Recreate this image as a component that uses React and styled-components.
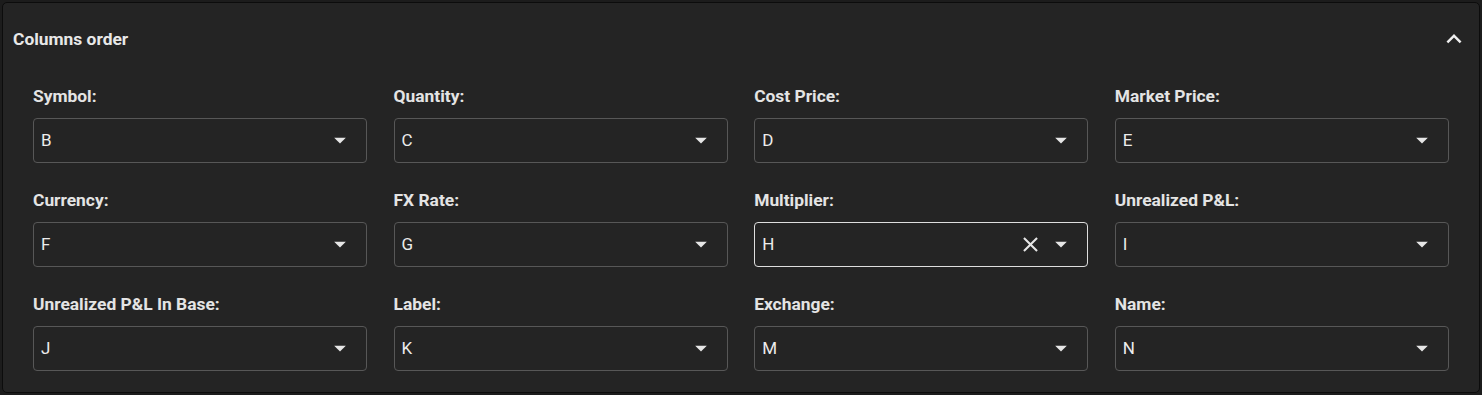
import React from "react";
import styled, { createGlobalStyle } from "styled-components";

const GlobalStyle = createGlobalStyle`
  html, body {
    margin: 0;
    padding: 0;
    background: #1c1c1c;
  }
  body {
    padding: 2px;
    font-family: Roboto, "Liberation Sans", Arial, sans-serif;
  }
`;

const Panel = styled.section`
  box-sizing: border-box;
  height: 391px;
  background: #242424;
  border: 1px solid #0c0c0c;
  border-radius: 5px;
  color: #e6e6e6;
`;

const Header = styled.div`
  display: flex;
  align-items: center;
  justify-content: space-between;
  height: 72px;
  padding: 0 10px 0 10px;
`;

const Title = styled.h2`
  margin: 0;
  font-size: 17.4px;
  line-height: 22px;
  font-weight: 700;
  color: #e8e8e8;
`;

const CollapseButton = styled.button`
  display: flex;
  align-items: center;
  justify-content: center;
  width: 30px;
  height: 30px;
  padding: 0;
  margin: 0;
  border: none;
  background: transparent;
  color: #eeeeee;
  cursor: pointer;
`;

const Grid = styled.div`
  display: grid;
  grid-template-columns: repeat(4, 1fr);
  column-gap: 26.33px;
  row-gap: 27px;
  padding: 11px 30px 0 30px;
`;

const Field = styled.div`
  display: flex;
  flex-direction: column;
  gap: 12px;
  min-width: 0;
`;

const Label = styled.label`
  font-size: 17.4px;
  line-height: 20px;
  font-weight: 700;
  color: #e4e4e4;
  white-space: nowrap;
`;

const SelectBox = styled.div`
  box-sizing: border-box;
  display: flex;
  align-items: center;
  height: 45px;
  padding: 0 12px 1px 7px;
  border: 1px solid ${(p) => (p.$focused ? "#dedede" : "#575757")};
  border-radius: 4px;
  background: #242424;
`;

const Value = styled.span`
  flex: 1;
  font-size: 17px;
  color: #ececec;
`;

const IconButton = styled.span`
  display: flex;
  align-items: center;
  justify-content: center;
  color: #e6e6e6;
  width: ${(p) => p.$size}px;
  height: ${(p) => p.$size}px;
  margin-right: ${(p) => p.$gap || 0}px;
`;

const ArrowDown = () => (
  <svg width="28" height="28" viewBox="0 0 24 24" fill="currentColor">
    <path d="M7 10l5 5 5-5z" />
  </svg>
);

const CloseIcon = () => (
  <svg width="25" height="25" viewBox="0 0 24 24" fill="currentColor">
    <path d="M19 6.41 17.59 5 12 10.59 6.41 5 5 6.41 10.59 12 5 17.59 6.41 19 12 13.41 17.59 19 19 17.59 13.41 12z" />
  </svg>
);

const ExpandLess = () => (
  <svg width="30" height="30" viewBox="0 0 24 24" fill="currentColor">
    <path d="M12 8l-6 6 1.41 1.41L12 10.83l4.59 4.58L18 14z" />
  </svg>
);

const fields = [
  { label: "Symbol:", value: "B" },
  { label: "Quantity:", value: "C" },
  { label: "Cost Price:", value: "D" },
  { label: "Market Price:", value: "E" },
  { label: "Currency:", value: "F" },
  { label: "FX Rate:", value: "G" },
  { label: "Multiplier:", value: "H", focused: true },
  { label: "Unrealized P&L:", value: "I" },
  { label: "Unrealized P&L In Base:", value: "J" },
  { label: "Label:", value: "K" },
  { label: "Exchange:", value: "M" },
  { label: "Name:", value: "N" },
];

export default function App() {
  return (
    <>
      <GlobalStyle />
      <Panel>
        <Header>
          <Title>Columns order</Title>
          <CollapseButton aria-label="collapse">
            <ExpandLess />
          </CollapseButton>
        </Header>
        <Grid>
          {fields.map((f) => (
            <Field key={f.label}>
              <Label>{f.label}</Label>
              <SelectBox $focused={f.focused}>
                <Value>{f.value}</Value>
                {f.focused && (
                  <IconButton $size={25} $gap={4}>
                    <CloseIcon />
                  </IconButton>
                )}
                <IconButton $size={28}>
                  <ArrowDown />
                </IconButton>
              </SelectBox>
            </Field>
          ))}
        </Grid>
      </Panel>
    </>
  );
}
